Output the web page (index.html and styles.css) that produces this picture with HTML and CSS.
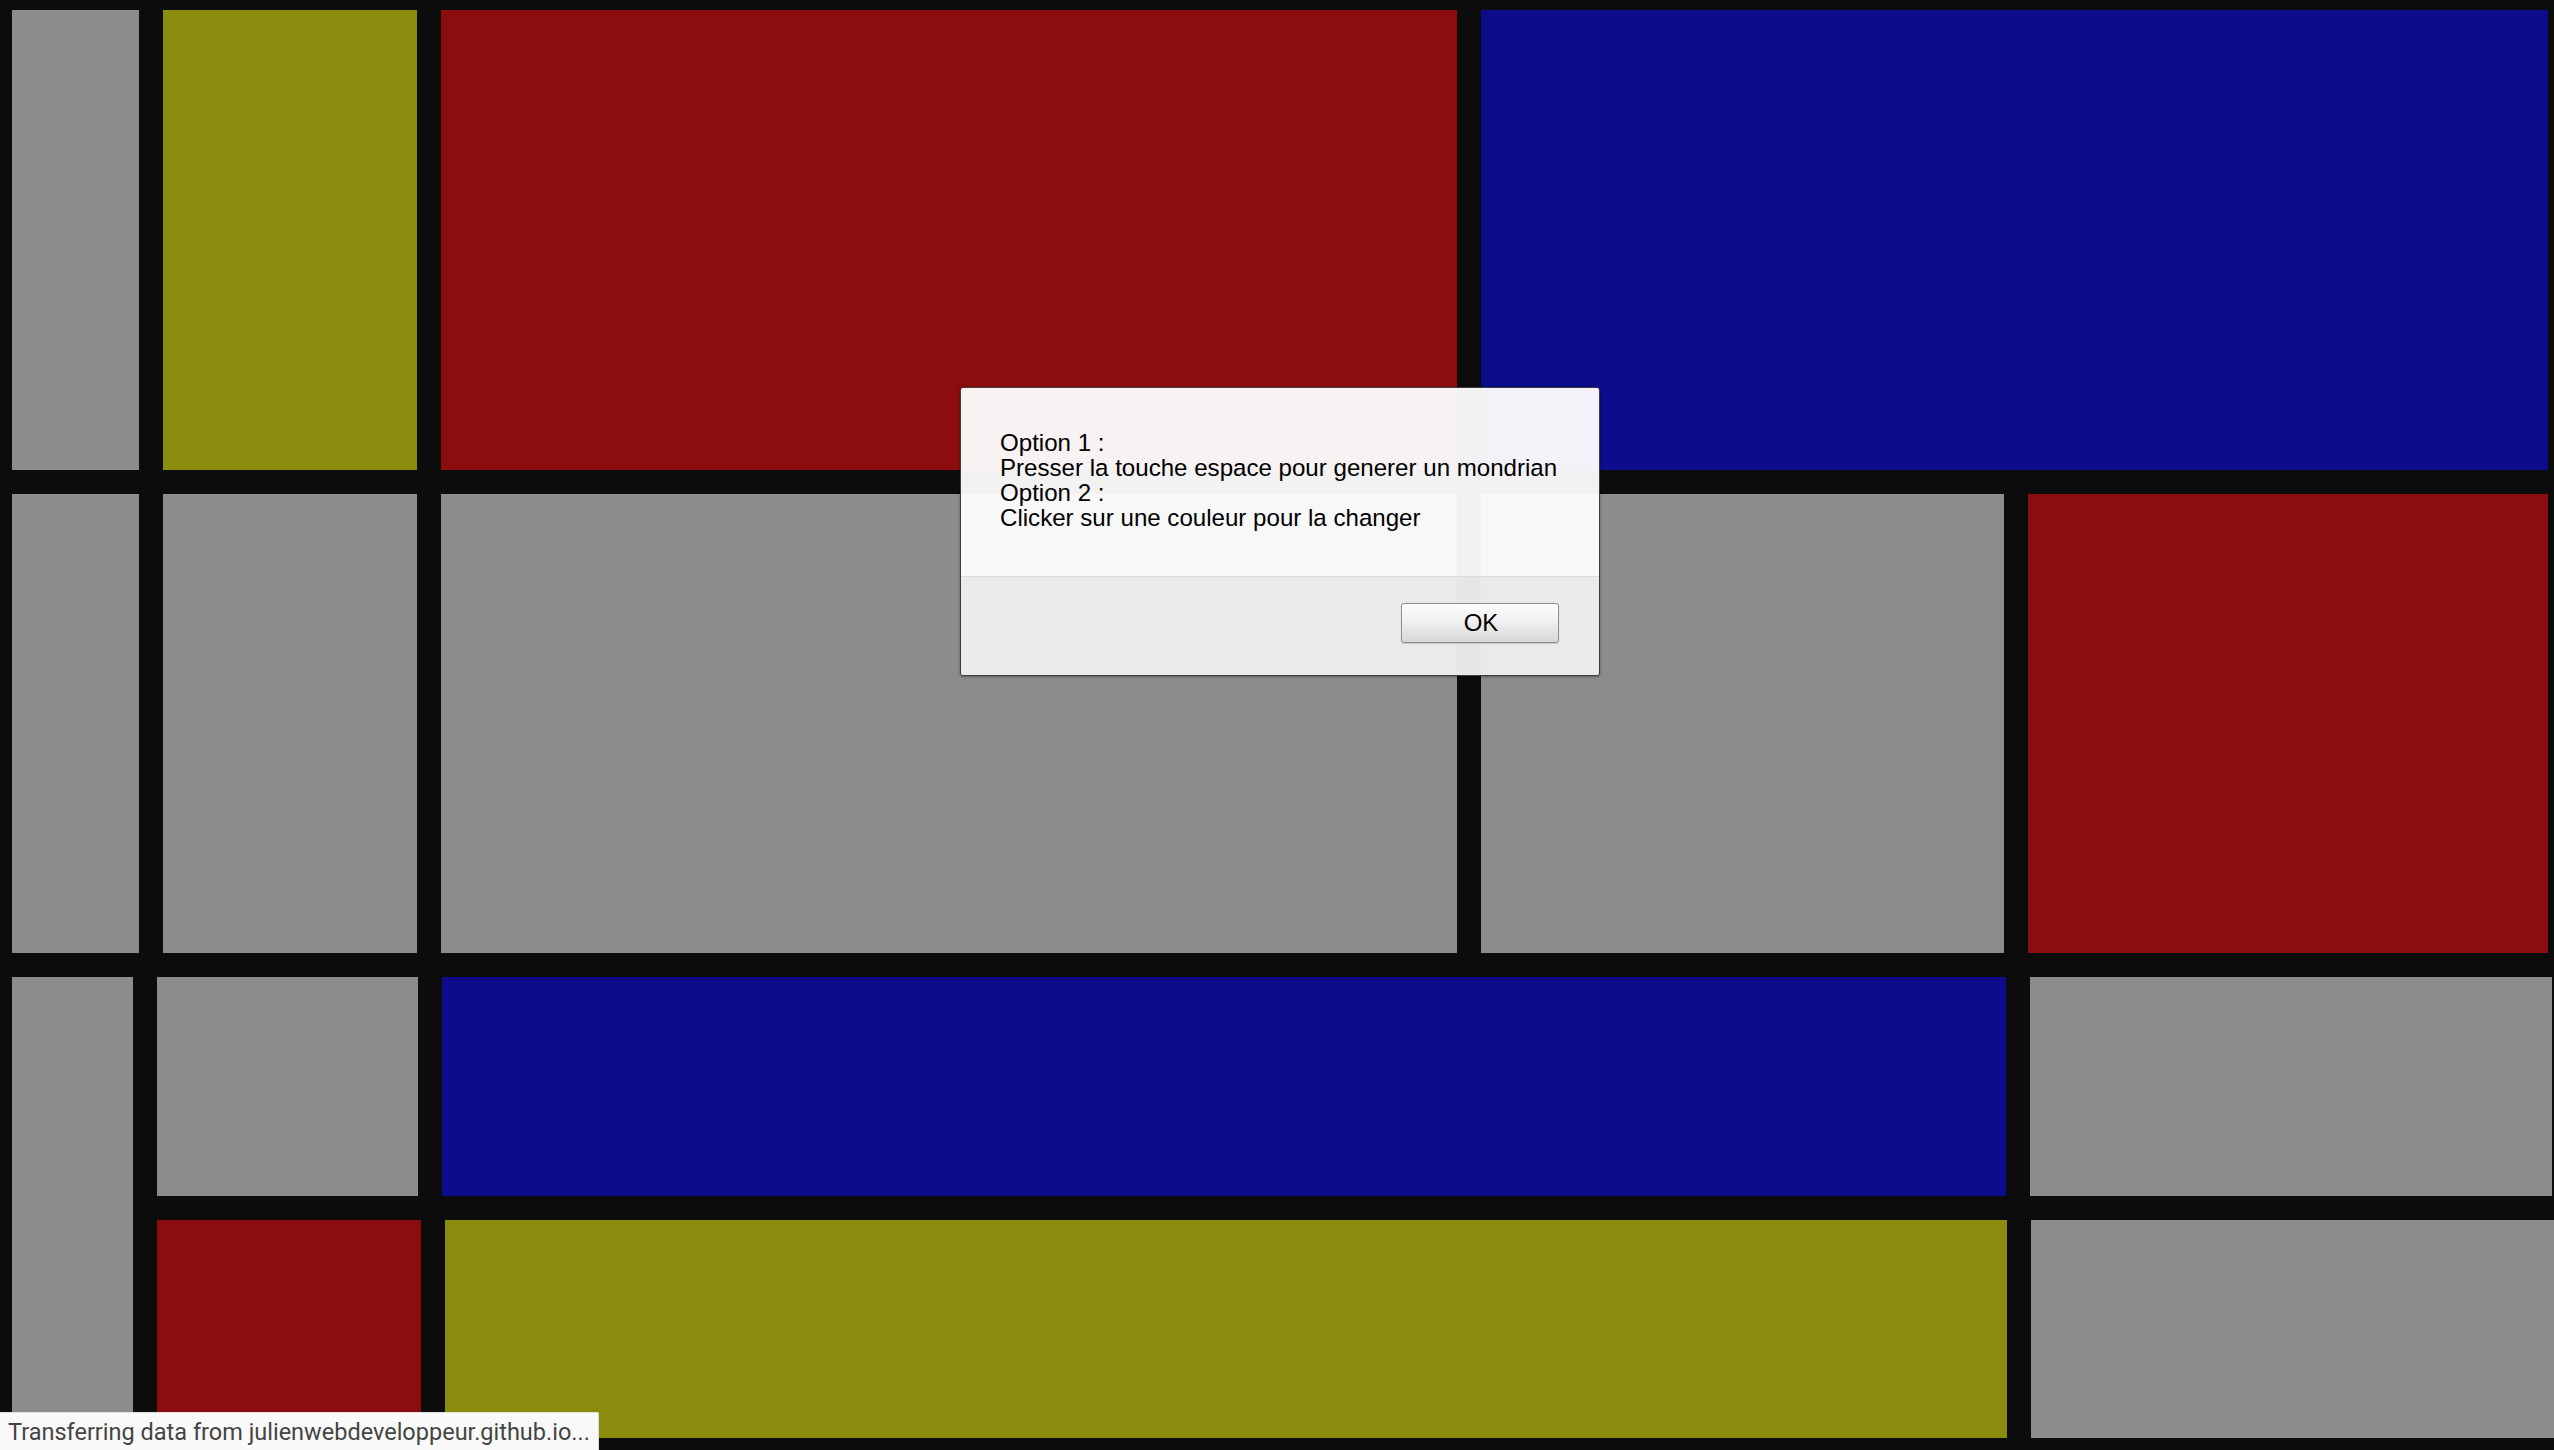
FILE: index.html
```html
<!DOCTYPE html>
<html lang="fr">
<head>
<meta charset="utf-8">
<title>Mondrian</title>
<link rel="stylesheet" href="styles.css">
</head>
<body>
<main class="canvas">
  <div class="row">
    <div class="block gray" style="width:127px"></div>
    <div class="block yellow" style="width:254px"></div>
    <div class="block red" style="width:1016px"></div>
    <div class="block blue" style="width:1067px"></div>
  </div>
  <div class="row">
    <div class="block gray" style="width:127px"></div>
    <div class="block gray" style="width:254px"></div>
    <div class="block gray" style="width:1016px"></div>
    <div class="block gray" style="width:523px"></div>
    <div class="block red" style="width:520px"></div>
  </div>
  <div class="row">
    <div class="block gray" style="width:121px"></div>
    <div class="nested">
      <div class="subrow">
        <div class="block gray" style="width:261px"></div>
        <div class="block blue" style="width:1564px"></div>
        <div class="block gray" style="width:522px"></div>
      </div>
      <div class="subrow">
        <div class="block red" style="width:264px"></div>
        <div class="block yellow" style="width:1562px"></div>
        <div class="block gray" style="width:530px"></div>
      </div>
    </div>
  </div>
</main>

<div class="dialog" role="alertdialog">
  <div class="dialog-body">
    <p class="msg">Option 1 :<br>Presser la touche espace pour generer un mondrian<br>Option 2 :<br>Clicker sur une couleur pour la changer</p>
  </div>
  <div class="dialog-foot">
    <button class="ok" type="button">OK</button>
  </div>
</div>

<div class="status">Transferring data from julienwebdeveloppeur.github.io...</div>
</body>
</html>
```

FILE: styles.css
```css
html, body {
  margin: 0;
  padding: 0;
}
body {
  width: 2554px;
  height: 1450px;
  overflow: hidden;
  background: #0c0c0c;
  font-family: "Liberation Sans", Arial, sans-serif;
}
.canvas {
  display: grid;
  grid-template-rows: 460px 459px 461px;
  row-gap: 24px;
  padding: 10px 0 12px;
  height: 1450px;
  box-sizing: border-box;
}
.row {
  display: flex;
  column-gap: 24px;
  padding-left: 12px;
  min-width: 0;
}
.block {
  flex: 0 0 auto;
  height: 100%;
}
.nested {
  flex: 1 1 auto;
  display: grid;
  grid-template-rows: 1fr 1fr;
  row-gap: 24px;
  min-width: 0;
}
.subrow {
  display: flex;
  column-gap: 24px;
}
.gray { background: #8c8c8c; }
.red { background: #8b0d0d; }
.blue { background: #0d0c8b; }
.yellow { background: #8b8b0d; }

.dialog {
  position: absolute;
  left: 960px;
  top: 387px;
  width: 640px;
  height: 289px;
  box-sizing: border-box;
  border: 1px solid #3c3c3c;
  border-radius: 3px;
  box-shadow: 0 1px 3px rgba(0, 0, 0, 0.35);
  display: flex;
  flex-direction: column;
  overflow: hidden;
}
.dialog-body {
  height: 189px;
  box-sizing: border-box;
  padding: 42px 39px 0;
  background: rgba(253, 253, 253, 0.955);
  border-bottom: 1px solid #dadada;
}
.msg {
  margin: 0;
  font-size: 24.1px;
  line-height: 25px;
  color: #000;
  white-space: nowrap;
}
.dialog-foot {
  flex: 1;
  display: flex;
  justify-content: flex-end;
  align-items: flex-start;
  padding: 26px 40px 0 0;
  background: rgba(237, 237, 237, 0.97);
}
.ok {
  width: 158px;
  height: 40px;
  box-sizing: border-box;
  border: 1px solid #8e8e8e;
  border-radius: 3px;
  background: linear-gradient(#fbfbfb, #f1f1f1 45%, #d8d8d8);
  box-shadow: 0 1px 1px rgba(0, 0, 0, 0.15);
  font-family: "Liberation Sans", Arial, sans-serif;
  font-size: 24px;
  color: #000;
  padding: 0 0 0 2px;
  line-height: 38px;
}

.status {
  position: fixed;
  left: 0;
  bottom: 0;
  width: 599px;
  height: 38px;
  box-sizing: border-box;
  padding: 0 0 0 8px;
  background: #f9f9f9;
  border-top: 1px solid #dedede;
  border-right: 1px solid #dedede;
  border-top-right-radius: 2px;
  font-family: Roboto, "Noto Sans", sans-serif;
  font-size: 23.5px;
  line-height: 38px;
  color: #444;
  white-space: nowrap;
  overflow: hidden;
}
```
